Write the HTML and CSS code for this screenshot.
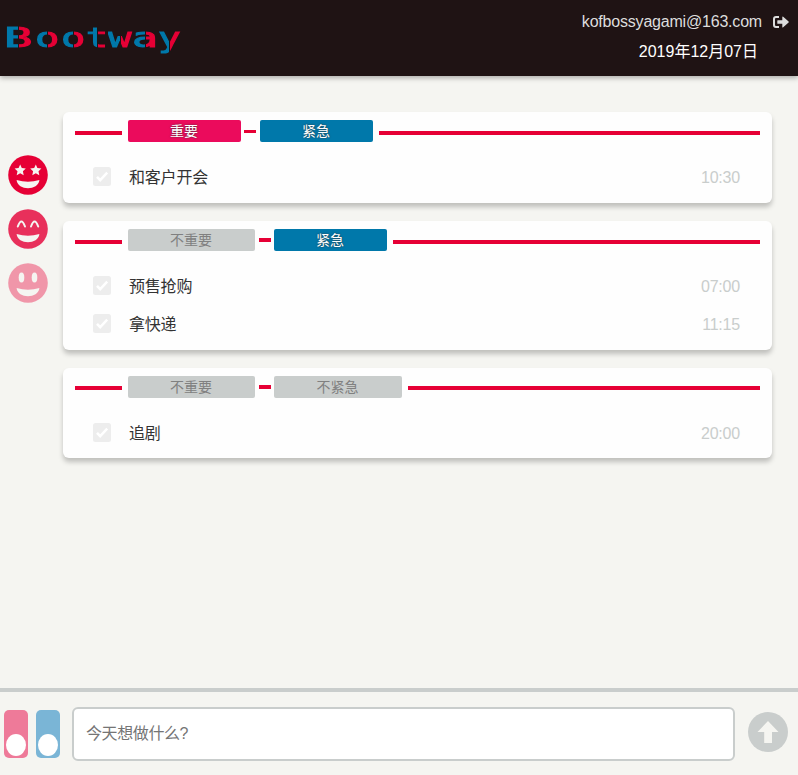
FILE: index.html
```html
<!DOCTYPE html>
<html lang="zh-CN">
<head>
<meta charset="utf-8">
<title>Bootway</title>
<link rel="stylesheet" href="styles.css">
</head>
<body>
<svg class="sprite" width="0" height="0" aria-hidden="true">
  <symbol id="check" viewBox="0 0 18 19"><rect width="18" height="19" rx="2.5" fill="#ededed"/><path d="M4 9.8 7.2 13.2 14.2 5.700" fill="none" stroke="#fff" stroke-width="2.5"/></symbol>
</svg>
<header class="header">
  <h1 class="logo"><span class="b">B</span><span>o</span><span>o</span><span class="t">t</span><span class="w">w</span><span class="a">a</span><span class="y">y</span></h1>
  <div class="account">
    <div class="user">kofbossyagami@163.com
      <svg class="logout" viewBox="0 0 16 12"><path d="M6 1H3Q1 1 1 3V9Q1 11 3 11H6" fill="none" stroke="#ddd" stroke-width="2"/><path d="M4.8 4.2H9.3V1Q9.4.1 10.2.7L15.6 5.4Q16 6 15.6 6.6L10.2 11.3Q9.4 11.9 9.3 11V7.8H4.8Q4.3 7.8 4.3 7.2V4.8Q4.3 4.2 4.8 4.2Z" fill="#ddd"/></svg>
    </div>
    <div class="date">2019年12月07日</div>
  </div>
</header>
<main class="main">
  <nav class="moods">
    <svg viewBox="0 0 40 40"><circle cx="20" cy="20" r="19.8" fill="#e60035"/><path class="cut" d="m12.2 9.5 1.6 3.6 4 .5-2.9 2.7.8 3.9-3.5-1.9-3.5 1.9.8-3.9-2.9-2.7 4-.5ZM27.8 9.5l1.6 3.6 4 .5-2.9 2.7.8 3.9-3.5-1.9-3.5 1.9.8-3.9-2.9-2.7 4-.5ZM8.6 25Q20 28.6 31.4 25C30.4 36 9.6 36 8.6 25Z"/></svg>
    <svg viewBox="0 0 40 40"><circle cx="20" cy="20" r="19.8" fill="#e8305b"/><path class="cut" d="M8.6 25Q20 28.6 31.4 25C30.4 36 9.6 36 8.6 25Z"/><path class="brow" d="M9.8 17.5Q13.4 7.5 17 17.5M23 17.5Q26.6 7.5 30.2 17.5"/></svg>
    <svg viewBox="0 0 40 40"><circle cx="20" cy="20" r="19.8" fill="#f096a9"/><path class="cut" d="M8.6 25Q20 28.6 31.4 25C30.4 36 9.6 36 8.6 25Z"/><ellipse class="cut" cx="13.5" cy="14.5" rx="2.8" ry="5"/><ellipse class="cut" cx="26.5" cy="14.5" rx="2.8" ry="5"/></svg>
  </nav>
  <div class="board">
    <section class="card">
      <div class="tags"><i class="line start"></i><b class="tag important">重要</b><i class="dash"></i><b class="tag urgent">紧急</b><i class="line end"></i></div>
      <div class="task"><svg class="check"><use href="#check"/></svg><span>和客户开会</span><time>10:30</time></div>
    </section>
    <section class="card">
      <div class="tags"><i class="line start"></i><b class="tag off">不重要</b><i class="dash"></i><b class="tag urgent">紧急</b><i class="line end"></i></div>
      <div class="task"><svg class="check"><use href="#check"/></svg><span>预售抢购</span><time>07:00</time></div>
      <div class="task"><svg class="check"><use href="#check"/></svg><span>拿快递</span><time>11:15</time></div>
    </section>
    <section class="card">
      <div class="tags"><i class="line start"></i><b class="tag off">不重要</b><i class="dash"></i><b class="tag off wide">不紧急</b><i class="line end"></i></div>
      <div class="task"><svg class="check"><use href="#check"/></svg><span>追剧</span><time>20:00</time></div>
    </section>
  </div>
</main>
<footer class="footer">
  <span class="switch pink"></span>
  <span class="switch blue"></span>
  <input class="entry" type="text" placeholder="今天想做什么?">
  <svg class="send" viewBox="0 0 40 40"><circle cx="20" cy="20" r="20" fill="#c9cdcc"/><path d="M20 9 30.5 20H24V31H16.200V20H9.500Z" fill="#f5f5f1"/></svg>
</footer>
</body>
</html>
```
FILE: styles.css
```css
* { box-sizing: border-box; }
body {
  margin: 0;
  height: 775px;
  display: flex;
  flex-direction: column;
  overflow: hidden;
  background: #f5f5f1;
  font: 16px "Liberation Sans", "Noto Sans CJK SC", sans-serif;
  color: #333;
}
.sprite { position: absolute; }
.header {
  height: 76px;
  flex: none;
  display: flex;
  justify-content: space-between;
  background: #1f1314;
  box-shadow: 0 2px 5px rgba(0, 0, 0, .3);
}
.logo {
  display: grid;
  grid-template-columns: 31px 26px 25px 22px 24px 26px 17px;
  margin: 21px 0 0 4px;
  font: 400 27px/34px "DejaVu Sans Mono", monospace;
}
.logo span {
  width: 17px;
  height: 34px;
  color: transparent;
  -webkit-text-stroke: 1px transparent;
  background: linear-gradient(90deg, #0078aa 48%, transparent 48%, transparent 52%, #e60035 52%);
  -webkit-background-clip: text;
  background-clip: text;
  transform: scaleX(1.5);
  transform-origin: 0 0;
}
.logo .b { transform: scaleX(1.75); }
.logo .t { transform: scaleX(1.35); }
.logo .w { transform: scaleX(1.45); }
.logo .a { transform: scaleX(1.6); }
.logo .y { transform: scaleX(1.4); }
.account {
  display: flex;
  flex-direction: column;
  align-items: flex-end;
  padding: 7px 9px 0 0;
  line-height: 30px;
}
.user { display: flex; align-items: center; gap: 11px; color: #ddd; letter-spacing: -.2px; }
.logout { width: 16px; height: 12px; }
.date { color: #fff; margin-right: 31px; }
.main { flex: 1; display: flex; padding: 36px 26px 0 8px; }
.moods { width: 55px; padding-top: 43px; display: flex; flex-direction: column; gap: 14px; }
.moods svg { width: 40px; height: 40px; }
.cut { fill: #f5f5f1; }
.brow { fill: none; stroke: #f5f5f1; stroke-width: 2; stroke-linecap: round; }
.board { flex: 1; display: flex; flex-direction: column; gap: 18px; }
.card {
  padding: 8px 12px 7px;
  border-radius: 6px;
  background: #fefefe;
  box-shadow: 0 4px 5px rgba(0, 0, 0, .22);
}
.card:last-child { padding-bottom: 6px; }
.tags { height: 22px; display: flex; align-items: center; margin-bottom: 16px; }
.line { height: 4px; margin-top: 4px; background: #e60035; }
.card:last-child .line { margin-top: 2px; }
.start { width: 47px; margin-right: 6px; }
.end { flex: 1; margin-left: 6px; }
.dash { width: 12px; height: 3px; margin: 0 4px 0 3px; background: #e60035; }
.tag {
  width: 113px;
  height: 22px;
  border-radius: 2px;
  font-size: 14px;
  font-weight: 400;
  line-height: 22px;
  text-align: center;
  text-indent: -1px;
  color: #fff;
  text-shadow: 0 0 2px #333;
}
.important { background: #eb0b5c; }
.urgent { background: #0078aa; }
.off { width: 127px; background: #c9cdcc; color: #808080; text-shadow: none; }
.wide { width: 128px; }
.off + .dash { height: 4px; margin-left: 4px; margin-right: 3px; }
.task { height: 38px; padding: 0 20px 1px 18px; display: flex; align-items: center; letter-spacing: -.2px; }
.task span { padding-bottom: 1px; }
.check { width: 18px; height: 19px; margin-right: 18px; }
.task time { margin-left: auto; padding-top: 2px; color: #c9cdcc; }
.footer {
  height: 87px;
  flex: none;
  display: flex;
  align-items: center;
  border-top: 4px solid #c9cdcc;
  padding: 0 10px 0 4px;
}
.switch { width: 24px; height: 48px; border-radius: 5px; margin-right: 8px; padding: 24px 2px 2px; }
.switch::after { content: ""; display: block; height: 22px; border-radius: 50%; background: #fff; }
.pink { background: #ee7a99; }
.blue { background: #7ab5d6; margin-right: 12px; }
.entry {
  width: 663px;
  height: 54px;
  border: 2px solid #c9cdcc;
  border-radius: 6px;
  padding: 0 12px;
  background: #fff;
  font: inherit;
  letter-spacing: -.4px;
}
.entry::placeholder { color: #757575; }
.send { width: 40px; height: 40px; margin: 0 0 4px auto; }
```
